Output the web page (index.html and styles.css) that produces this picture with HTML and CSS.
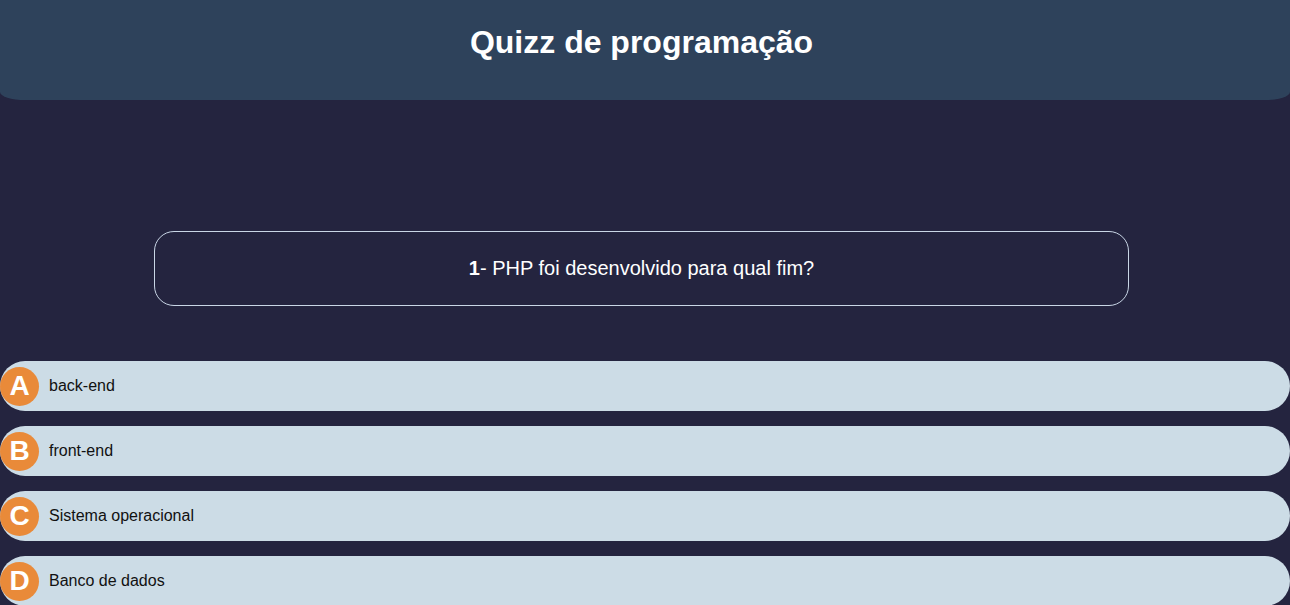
FILE: index.html
```html
<!DOCTYPE html>
<html lang="pt-BR">
<head>
<meta charset="utf-8">
<title>Quizz de programação</title>
<link rel="stylesheet" href="styles.css">
</head>
<body>
<header class="topo">
  <h1 class="titulo">Quizz de programação</h1>
</header>
<main class="quiz">
  <div class="pergunta"><strong>1</strong>- PHP foi desenvolvido para qual fim?</div>
  <ul class="respostas">
    <li class="resposta"><span class="letra">A</span><span class="texto">back-end</span></li>
    <li class="resposta"><span class="letra">B</span><span class="texto">front-end</span></li>
    <li class="resposta"><span class="letra">C</span><span class="texto">Sistema operacional</span></li>
    <li class="resposta"><span class="letra">D</span><span class="texto">Banco de dados</span></li>
  </ul>
</main>
</body>
</html>
```

FILE: styles.css
```css
* { box-sizing: border-box; }
html, body {
  margin: 0;
  padding: 0;
  background: #24243f;
  font-family: "Liberation Sans", Arial, sans-serif;
  overflow: hidden;
}
.topo {
  height: 100px;
  background: #2e425b;
  border-radius: 0 0 25px 25px / 0 0 8px 8px;
  display: flex;
  justify-content: center;
  padding: 24px 7px 0 0;
}
.titulo {
  margin: 0;
  color: #ffffff;
  font-size: 32px;
  font-weight: bold;
  line-height: 36px;
}
.quiz {
  padding-top: 131px;
}
.pergunta {
  margin: 0 161px 0 154px;
  height: 75px;
  border: 1px solid #c9d6e6;
  border-radius: 20px;
  color: #ffffff;
  font-size: 20px;
  display: flex;
  align-items: center;
  justify-content: center;
  padding-bottom: 1px;
}
.pergunta strong { font-weight: bold; }
.respostas {
  list-style: none;
  margin: 55px 0 0 0;
  padding: 0;
  display: flex;
  flex-direction: column;
  gap: 15px;
}
.resposta {
  height: 50px;
  background: #ccdce6;
  border-radius: 25px;
  display: flex;
  align-items: center;
  padding-left: 0;
}
.letra {
  width: 39px;
  height: 39px;
  border-radius: 50%;
  background: #e98a39;
  color: #ffffff;
  font-weight: bold;
  font-size: 28px;
  display: flex;
  align-items: center;
  justify-content: center;
  margin-left: 0;
}
.texto {
  margin-left: 10px;
  font-size: 16px;
  color: #111111;
}
```
